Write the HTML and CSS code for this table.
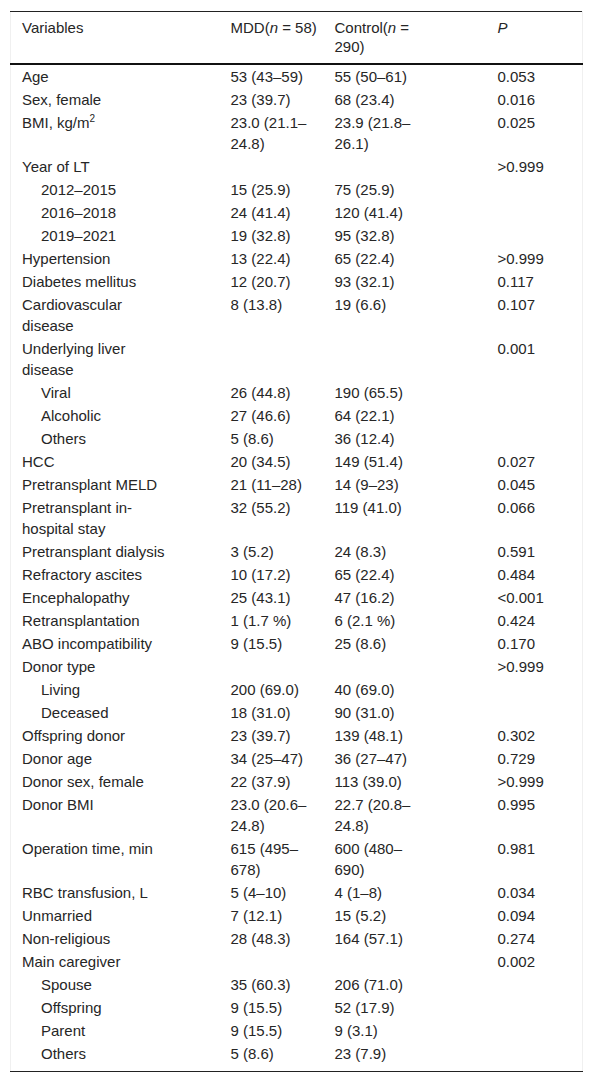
FILE: index.html
```html
<!DOCTYPE html>
<html>
<head>
  <meta charset="UTF-8">
  <title>Table 1</title>
  <link rel="stylesheet" href="styles.css">
</head>
<body>
  <div class="table-wrap">
    <table class="data-table">
      <colgroup>
        <col class="col-var">
        <col class="col-mdd">
        <col class="col-ctrl">
        <col class="col-p">
      </colgroup>
      <thead>
        <tr>
          <th><div class="cell c1">Variables</div></th>
          <th><div class="cell c2">MDD(<i>n</i> = 58)</div></th>
          <th><div class="cell c3">Control(<i>n</i> = 290)</div></th>
          <th><div class="cell c4"><i>P</i></div></th>
        </tr>
      </thead>
      <tbody>
        <tr><td><div class="cell c1">Age</div></td><td><div class="cell c2">53 (43–59)</div></td><td><div class="cell c3">55 (50–61)</div></td><td><div class="cell c4">0.053</div></td></tr>
        <tr><td><div class="cell c1">Sex, female</div></td><td><div class="cell c2">23 (39.7)</div></td><td><div class="cell c3">68 (23.4)</div></td><td><div class="cell c4">0.016</div></td></tr>
        <tr><td><div class="cell c1">BMI, kg/m<sup>2</sup></div></td><td><div class="cell c2">23.0 (21.1–24.8)</div></td><td><div class="cell c3">23.9 (21.8–26.1)</div></td><td><div class="cell c4">0.025</div></td></tr>
        <tr><td><div class="cell c1">Year of LT</div></td><td></td><td></td><td><div class="cell c4">&gt;0.999</div></td></tr>
        <tr><td><div class="cell c1 sub">2012–2015</div></td><td><div class="cell c2">15 (25.9)</div></td><td><div class="cell c3">75 (25.9)</div></td><td></td></tr>
        <tr><td><div class="cell c1 sub">2016–2018</div></td><td><div class="cell c2">24 (41.4)</div></td><td><div class="cell c3">120 (41.4)</div></td><td></td></tr>
        <tr><td><div class="cell c1 sub">2019–2021</div></td><td><div class="cell c2">19 (32.8)</div></td><td><div class="cell c3">95 (32.8)</div></td><td></td></tr>
        <tr><td><div class="cell c1">Hypertension</div></td><td><div class="cell c2">13 (22.4)</div></td><td><div class="cell c3">65 (22.4)</div></td><td><div class="cell c4">&gt;0.999</div></td></tr>
        <tr><td><div class="cell c1">Diabetes mellitus</div></td><td><div class="cell c2">12 (20.7)</div></td><td><div class="cell c3">93 (32.1)</div></td><td><div class="cell c4">0.117</div></td></tr>
        <tr><td><div class="cell c1">Cardiovascular disease</div></td><td><div class="cell c2">8 (13.8)</div></td><td><div class="cell c3">19 (6.6)</div></td><td><div class="cell c4">0.107</div></td></tr>
        <tr><td><div class="cell c1">Underlying liver disease</div></td><td></td><td></td><td><div class="cell c4">0.001</div></td></tr>
        <tr><td><div class="cell c1 sub">Viral</div></td><td><div class="cell c2">26 (44.8)</div></td><td><div class="cell c3">190 (65.5)</div></td><td></td></tr>
        <tr><td><div class="cell c1 sub">Alcoholic</div></td><td><div class="cell c2">27 (46.6)</div></td><td><div class="cell c3">64 (22.1)</div></td><td></td></tr>
        <tr><td><div class="cell c1 sub">Others</div></td><td><div class="cell c2">5 (8.6)</div></td><td><div class="cell c3">36 (12.4)</div></td><td></td></tr>
        <tr><td><div class="cell c1">HCC</div></td><td><div class="cell c2">20 (34.5)</div></td><td><div class="cell c3">149 (51.4)</div></td><td><div class="cell c4">0.027</div></td></tr>
        <tr><td><div class="cell c1">Pretransplant MELD</div></td><td><div class="cell c2">21 (11–28)</div></td><td><div class="cell c3">14 (9–23)</div></td><td><div class="cell c4">0.045</div></td></tr>
        <tr><td><div class="cell c1">Pretransplant in-hospital stay</div></td><td><div class="cell c2">32 (55.2)</div></td><td><div class="cell c3">119 (41.0)</div></td><td><div class="cell c4">0.066</div></td></tr>
        <tr><td><div class="cell c1">Pretransplant dialysis</div></td><td><div class="cell c2">3 (5.2)</div></td><td><div class="cell c3">24 (8.3)</div></td><td><div class="cell c4">0.591</div></td></tr>
        <tr><td><div class="cell c1">Refractory ascites</div></td><td><div class="cell c2">10 (17.2)</div></td><td><div class="cell c3">65 (22.4)</div></td><td><div class="cell c4">0.484</div></td></tr>
        <tr><td><div class="cell c1">Encephalopathy</div></td><td><div class="cell c2">25 (43.1)</div></td><td><div class="cell c3">47 (16.2)</div></td><td><div class="cell c4">&lt;0.001</div></td></tr>
        <tr><td><div class="cell c1">Retransplantation</div></td><td><div class="cell c2">1 (1.7 %)</div></td><td><div class="cell c3">6 (2.1 %)</div></td><td><div class="cell c4">0.424</div></td></tr>
        <tr><td><div class="cell c1">ABO incompatibility</div></td><td><div class="cell c2">9 (15.5)</div></td><td><div class="cell c3">25 (8.6)</div></td><td><div class="cell c4">0.170</div></td></tr>
        <tr><td><div class="cell c1">Donor type</div></td><td></td><td></td><td><div class="cell c4">&gt;0.999</div></td></tr>
        <tr><td><div class="cell c1 sub">Living</div></td><td><div class="cell c2">200 (69.0)</div></td><td><div class="cell c3">40 (69.0)</div></td><td></td></tr>
        <tr><td><div class="cell c1 sub">Deceased</div></td><td><div class="cell c2">18 (31.0)</div></td><td><div class="cell c3">90 (31.0)</div></td><td></td></tr>
        <tr><td><div class="cell c1">Offspring donor</div></td><td><div class="cell c2">23 (39.7)</div></td><td><div class="cell c3">139 (48.1)</div></td><td><div class="cell c4">0.302</div></td></tr>
        <tr><td><div class="cell c1">Donor age</div></td><td><div class="cell c2">34 (25–47)</div></td><td><div class="cell c3">36 (27–47)</div></td><td><div class="cell c4">0.729</div></td></tr>
        <tr><td><div class="cell c1">Donor sex, female</div></td><td><div class="cell c2">22 (37.9)</div></td><td><div class="cell c3">113 (39.0)</div></td><td><div class="cell c4">&gt;0.999</div></td></tr>
        <tr><td><div class="cell c1">Donor BMI</div></td><td><div class="cell c2">23.0 (20.6–24.8)</div></td><td><div class="cell c3">22.7 (20.8–24.8)</div></td><td><div class="cell c4">0.995</div></td></tr>
        <tr><td><div class="cell c1">Operation time, min</div></td><td><div class="cell c2">615 (495–678)</div></td><td><div class="cell c3">600 (480–690)</div></td><td><div class="cell c4">0.981</div></td></tr>
        <tr><td><div class="cell c1">RBC transfusion, L</div></td><td><div class="cell c2">5 (4–10)</div></td><td><div class="cell c3">4 (1–8)</div></td><td><div class="cell c4">0.034</div></td></tr>
        <tr><td><div class="cell c1">Unmarried</div></td><td><div class="cell c2">7 (12.1)</div></td><td><div class="cell c3">15 (5.2)</div></td><td><div class="cell c4">0.094</div></td></tr>
        <tr><td><div class="cell c1">Non-religious</div></td><td><div class="cell c2">28 (48.3)</div></td><td><div class="cell c3">164 (57.1)</div></td><td><div class="cell c4">0.274</div></td></tr>
        <tr><td><div class="cell c1">Main caregiver</div></td><td></td><td></td><td><div class="cell c4">0.002</div></td></tr>
        <tr><td><div class="cell c1 sub">Spouse</div></td><td><div class="cell c2">35 (60.3)</div></td><td><div class="cell c3">206 (71.0)</div></td><td></td></tr>
        <tr><td><div class="cell c1 sub">Offspring</div></td><td><div class="cell c2">9 (15.5)</div></td><td><div class="cell c3">52 (17.9)</div></td><td></td></tr>
        <tr><td><div class="cell c1 sub">Parent</div></td><td><div class="cell c2">9 (15.5)</div></td><td><div class="cell c3">9 (3.1)</div></td><td></td></tr>
        <tr class="last-row"><td><div class="cell c1 sub">Others</div></td><td><div class="cell c2">5 (8.6)</div></td><td><div class="cell c3">23 (7.9)</div></td><td></td></tr>
      </tbody>
    </table>
  </div>
</body>
</html>
```

FILE: styles.css
```css
body {
  margin: 0;
  background: #fff;
  font-family: "Liberation Sans", Arial, sans-serif;
  font-size: 15px;
  color: #262626;
}
.table-wrap {
  padding: 11px 10px 0;
}
.data-table {
  width: 572px;
  table-layout: fixed;
  border-collapse: collapse;
  border-top: 1px solid #222;
  border-bottom: 1px solid #222;
  border-left: 1px solid #f0f0f0;
  border-right: 1px solid #f0f0f0;
}
.col-var {
  width: 209px;
}
.col-mdd {
  width: 104px;
}
.col-ctrl {
  width: 163px;
}
.col-p {
  width: 96px;
}
th,
td {
  padding: 1px 0 1px 11px;
  text-align: left;
  vertical-align: top;
  font-weight: normal;
  line-height: 21px;
}
th {
  padding-top: 6px;
  padding-bottom: 7px;
  line-height: 19px;
  border-bottom: 2px solid #111;
}
.last-row td {
  padding-bottom: 7px;
}

/* text width inside each column, so lines wrap like the print table */
.c1 {
  width: 150px;
}
.c2 {
  width: 92px;
}
.c3 {
  width: 92px;
}
.c4 {
  width: 80px;
}
.sub {
  padding-left: 19px;
  width: 131px;
}
sup {
  font-size: 10px;
  line-height: 0;
  vertical-align: 6px;
}
```
